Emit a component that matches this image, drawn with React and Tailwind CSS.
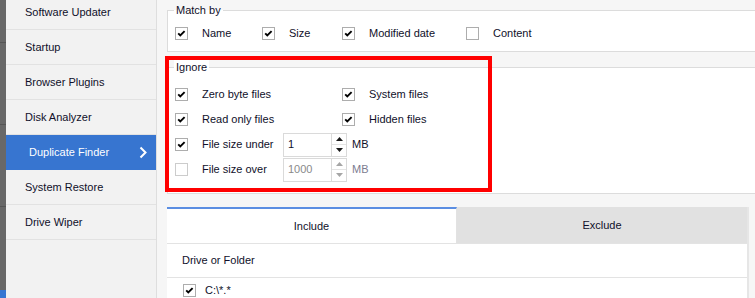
import React from "react";

const font = { fontFamily: '"Liberation Sans", Arial, sans-serif' };

function Check({ checked = true, disabled = false }) {
  return (
    <span
      className={`flex items-center justify-center w-[13px] h-[13px] shrink-0 border bg-white ${
        disabled ? "border-[#cccccc]" : "border-[#adadad]"
      }`}
    >
      {checked && (
        <svg width="11" height="11" viewBox="0 0 11 11">
          <polyline
            points="2.2,5.4 4.3,7.5 8.6,3.2"
            fill="none"
            stroke="#000"
            strokeWidth="1.9"
          />
        </svg>
      )}
    </span>
  );
}

function Item({ checked = true, disabled = false, label, w }) {
  return (
    <div className={`flex items-center gap-[14px] shrink-0 whitespace-nowrap ${w || ""}`}>
      <Check checked={checked} disabled={disabled} />
      <span className="text-[#10102a]">{label}</span>
    </div>
  );
}

function Spin({ value, disabled = false }) {
  const tri = disabled ? "#a6a6a6" : "#1a1a1a";
  return (
    <div className="flex items-center">
      <div className="flex w-[64px] h-[24px] border border-[#dadada] bg-white">
        <div
          className={`flex-1 pl-[4px] pt-[3px] leading-[14px] ${
            disabled ? "text-[#8a8a8a]" : "text-[#10102a]"
          }`}
        >
          {value}
        </div>
        <div className="flex flex-col w-[15px] border-l border-[#dadada]">
          <div className="flex-1 flex items-center justify-center border-b border-[#e4e4e4]">
            <svg width="7" height="4" viewBox="0 0 7 4">
              <polygon points="0,4 7,4 3.5,0" fill={tri} />
            </svg>
          </div>
          <div className="flex-1 flex items-center justify-center">
            <svg width="7" height="4" viewBox="0 0 7 4">
              <polygon points="0,0 7,0 3.5,4" fill={tri} />
            </svg>
          </div>
        </div>
      </div>
      <span
        className={`ml-[5px] ${disabled ? "text-[#7c7c90]" : "text-[#10102a]"}`}
      >
        MB
      </span>
    </div>
  );
}

const items = [
  "Software Updater",
  "Startup",
  "Browser Plugins",
  "Disk Analyzer",
  "Duplicate Finder",
  "System Restore",
  "Drive Wiper",
];

export default function App() {
  return (
    <div
      className="relative flex w-[755px] h-[298px] overflow-hidden bg-[#f6f6f6] text-[11px]"
      style={font}
    >
      {/* left dark strip */}
      <div className="flex flex-col w-[6px] shrink-0 bg-[#686868]">
        <div className="h-[43px] border-b border-[#555555]" />
        <div className="h-[82px] border-b border-[#555555]" />
        <div className="h-[82px] border-b border-[#555555]" />
        <div className="flex-1" />
        <div className="h-[8px] bg-[#3776d2]" />
      </div>

      {/* sidebar */}
      <div className="flex flex-col w-[151px] shrink-0 bg-[#f2f2f2] border-r border-[#dedede]">
        <div className="mt-[-5px]">
          {items.map((t) =>
            t === "Duplicate Finder" ? (
              <div
                key={t}
                className="flex items-center justify-between h-[35px] pl-[23px] pr-[9px] bg-[#3775d0] text-white"
              >
                <span>{t}</span>
                <svg width="8" height="13" viewBox="0 0 8 13">
                  <polyline
                    points="1.5,1.5 6.5,6.5 1.5,11.5"
                    fill="none"
                    stroke="#fff"
                    strokeWidth="2"
                  />
                </svg>
              </div>
            ) : (
              <div
                key={t}
                className="flex items-center h-[35px] pl-[19px] border-b border-[#e2e2e2] text-[#10102a]"
              >
                {t}
              </div>
            )
          )}
        </div>
      </div>

      {/* main */}
      <div className="flex flex-col flex-1 min-w-0 pl-[10px] pt-[3px] overflow-hidden">
        <fieldset className="w-[620px] shrink-0 border border-[#dcdcdc] bg-white">
          <legend className="ml-[6px] px-[2px] leading-[14px] text-[#10102a]">
            Match by
          </legend>
          <div className="flex items-center h-[34px] pb-[2px] pl-[7px]">
            <Item label="Name" w="w-[87px]" />
            <Item label="Size" w="w-[80px]" />
            <Item label="Modified date" w="w-[124px]" />
            <Item label="Content" checked={false} />
          </div>
        </fieldset>

        <fieldset className="mt-[8px] w-[620px] shrink-0 border border-[#dcdcdc] bg-white">
          <legend className="ml-[6px] px-[2px] leading-[14px] bg-white text-[#10102a]">
            Ignore
          </legend>
          <div className="grid grid-cols-[167px_1fr] auto-rows-[25px] items-center pt-[8px] pb-[11px] pl-[7px]">
            <Item label="Zero byte files" />
            <Item label="System files" />
            <Item label="Read only files" />
            <Item label="Hidden files" />
            <div className="flex items-center">
              <Item label="File size under" w="w-[108px]" />
              <Spin value="1" />
            </div>
            <div />
            <div className="flex items-center">
              <Item label="File size over" checked={false} disabled w="w-[108px]" />
              <Spin value="1000" disabled />
            </div>
            <div />
          </div>
        </fieldset>

        <div className="mt-[13px] flex flex-col w-[582px] shrink-0 flex-1 border-r-2 border-[#e6e6e6]">
          <div className="flex h-[36px] shrink-0">
            <div className="flex items-center justify-center w-[290px] bg-white border-t-2 border-[#5b8ee2] border-r border-r-[#e2e2e2] text-[#10102a]">
              Include
            </div>
            <div className="flex flex-1 items-center justify-center bg-[#e1e1e1] text-[#10102a]">
              Exclude
            </div>
          </div>
          <div className="flex-1 bg-white border-t border-[#e3e3e3]">
            <div className="flex items-center h-[34px] pl-[15px] border-b border-[#e3e3e3] text-[#10102a]">
              Drive or Folder
            </div>
            <div className="flex items-center gap-[9px] h-[24px] pl-[16px] text-[#10102a]">
              <Check />
              <span>C:\*.*</span>
            </div>
          </div>
        </div>
      </div>

      {/* red annotation rectangle */}
      <div className="absolute left-[165px] top-[56px] w-[327px] h-[136px] border-4 border-[#ff0000] pointer-events-none" />
    </div>
  );
}
